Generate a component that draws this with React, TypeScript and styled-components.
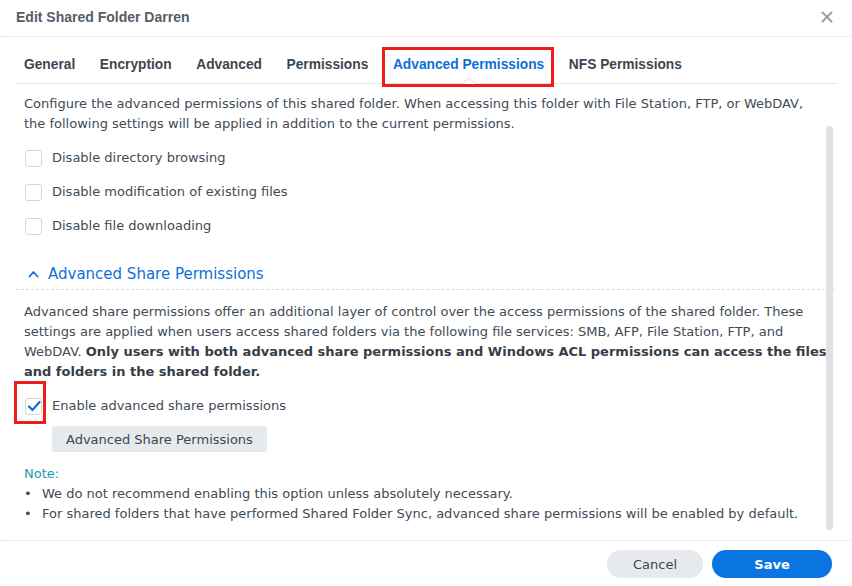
import React from "react";
import styled, { createGlobalStyle } from "styled-components";

const Global = createGlobalStyle`
  html, body { margin: 0; padding: 0; background: #fff; }
  body { font-family: "DejaVu Sans", Verdana, sans-serif; color: #414b55; }
  * { box-sizing: border-box; }
`;

const Dialog = styled.div`
  width: 852px;
  height: 586px;
  display: flex;
  flex-direction: column;
  background: #fff;
  overflow: hidden;
`;

const Header = styled.div`
  height: 37px;
  flex: none;
  display: flex;
  align-items: center;
  justify-content: space-between;
  padding: 0 16px 3px 16px;
  border-bottom: 1px dotted #d6d9dc;
`;

const Title = styled.div`
  font-family: "Liberation Sans", Arial, sans-serif;
  font-weight: 700;
  font-size: 14px;
  color: #555d66;
`;

const Close = styled.button`
  border: 0;
  background: none;
  padding: 0;
  width: 14px;
  height: 14px;
  display: flex;
  align-items: center;
  justify-content: center;
  margin-right: 2px;
`;

const TabBar = styled.div`
  flex: none;
  display: flex;
  gap: 24.6px;
  margin: 0 15px 0 16px;
  padding-left: 8px;
  border-bottom: 1px solid #e3e6e9;
`;

const Tab = styled.div<{ $active?: boolean }>`
  position: relative;
  font-family: "Liberation Sans", Arial, sans-serif;
  font-weight: 700;
  font-size: 13.75px;
  line-height: 16px;
  padding: 20px 0 10px;
  color: ${(p) => (p.$active ? "#0d6fd9" : "#3d4650")};
`;

const Caret = styled.span`
  position: absolute;
  left: 50%;
  bottom: -1px;
  width: 10px;
  height: 10px;
  margin-left: -5px;
  transform: translateY(5px) rotate(45deg);
  background: #fff;
  border-left: 1px solid #e3e6e9;
  border-top: 1px solid #e3e6e9;
`;

const RedBox = styled.span<{ $l: number; $t: number; $r: number; $b: number }>`
  position: absolute;
  left: ${(p) => p.$l}px;
  top: ${(p) => p.$t}px;
  right: ${(p) => p.$r}px;
  bottom: ${(p) => p.$b}px;
  border: 3px solid #f11b1b;
  pointer-events: none;
`;

const BodyWrap = styled.div`
  position: relative;
  flex: 1;
  min-height: 0;
`;

const Content = styled.div`
  padding: 10px 20px 0 24px;
  font-size: 13px;
  line-height: 20px;
  color: #414b55;
`;

const Thumb = styled.div`
  position: absolute;
  top: 42px;
  right: 19px;
  width: 7px;
  height: 404px;
  border-radius: 4px;
  background: #dfe1e3;
`;

const Para = styled.p<{ $inset?: number }>`
  margin: 0;
  padding-right: ${(p) => p.$inset ?? 0}px;
`;

const Strong = styled.b`
  font-weight: 700;
  color: #353e48;
`;

const CheckList = styled.div`
  margin-top: 7px;
  display: flex;
  flex-direction: column;
`;

const CheckRow = styled.label<{ $h?: number }>`
  display: flex;
  align-items: center;
  gap: 10px;
  height: ${(p) => p.$h ?? 34}px;
  padding-left: 1px;
`;

const Box = styled.span`
  position: relative;
  width: 17px;
  height: 17px;
  flex: none;
  border: 1px solid #d3d7dc;
  border-radius: 3px;
  background: #fff;
  display: flex;
  align-items: center;
  justify-content: center;
`;

const SectionHead = styled.div`
  margin: 20px -3px 0 -8px;
  padding: 0 0 4px 12px;
  display: flex;
  align-items: center;
  gap: 9px;
  height: 27px;
  border-bottom: 1px dashed #d9dcdf;
  font-size: 15px;
  color: #0d70d9;
`;

const Section = styled.div`
  padding-top: 12px;
`;

const EnableRow = styled(CheckRow)`
  margin-top: 12px;
`;

const GreyButton = styled.button`
  margin: 8px 0 0 28px;
  height: 26px;
  padding: 0 14px;
  border: 0;
  border-radius: 3px;
  background: #e6eaed;
  font-family: "DejaVu Sans", Verdana, sans-serif;
  font-size: 13px;
  color: #3d4650;
`;

const Note = styled.div`
  margin-top: 12px;
  color: #1b9bb0;
`;

const Bullets = styled.ul`
  margin: 0;
  padding: 0;
  list-style: none;
`;

const Bullet = styled.li`
  display: flex;
  gap: 12px;
  &::before {
    content: "•";
    width: 6px;
  }
`;

const Footer = styled.div`
  flex: none;
  height: 46px;
  border-top: 1px dotted #d6d9dc;
  display: flex;
  justify-content: flex-end;
  align-items: flex-start;
  gap: 9px;
  padding: 9px 20px 0 0;
`;

const Pill = styled.button<{ $primary?: boolean }>`
  height: 28px;
  width: ${(p) => (p.$primary ? 120 : 96)}px;
  border: 0;
  border-radius: 14px;
  font-family: "DejaVu Sans", Verdana, sans-serif;
  font-size: 13px;
  font-weight: ${(p) => (p.$primary ? 700 : 400)};
  background: ${(p) => (p.$primary ? "#0a74e0" : "#e6eaee")};
  color: ${(p) => (p.$primary ? "#fff" : "#3d4650")};
`;

const Check = () => (
  <svg width="14" height="14" viewBox="0 0 14 14">
    <path d="M2 7.5 L5.5 11 L12.5 3" fill="none" stroke="#0d70d9" strokeWidth="2.2" strokeLinecap="round" strokeLinejoin="round" />
  </svg>
);

const tabs = ["General", "Encryption", "Advanced", "Permissions", "Advanced Permissions", "NFS Permissions"];

export default function App() {
  return (
    <>
      <Global />
      <Dialog>
        <Header>
          <Title>Edit Shared Folder Darren</Title>
          <Close aria-label="close">
            <svg width="12" height="12" viewBox="0 0 12 12">
              <path d="M1.5 1.5 L10.5 10.5 M10.5 1.5 L1.5 10.5" stroke="#9aa0a6" strokeWidth="2" strokeLinecap="round" />
            </svg>
          </Close>
        </Header>
        <TabBar>
          {tabs.map((t) => (
            <Tab key={t} $active={t === "Advanced Permissions"}>
              {t}
              {t === "Advanced Permissions" && (
                <>
                  <Caret />
                  <RedBox $l={-11} $t={10} $r={-10} $b={-4} />
                </>
              )}
            </Tab>
          ))}
        </TabBar>
        <BodyWrap>
          <Content>
            <Para $inset={24}>
              Configure the advanced permissions of this shared folder. When accessing this folder with File Station, FTP, or WebDAV,
              the following settings will be applied in addition to the current permissions.
            </Para>
            <CheckList>
              <CheckRow><Box />Disable directory browsing</CheckRow>
              <CheckRow><Box />Disable modification of existing files</CheckRow>
              <CheckRow><Box />Disable file downloading</CheckRow>
            </CheckList>
            <SectionHead>
              <svg width="11" height="8" viewBox="0 0 11 8">
                <path d="M1.5 6.5 L5.5 2 L9.5 6.5" fill="none" stroke="#0d70d9" strokeWidth="1.8" strokeLinecap="round" strokeLinejoin="round" />
              </svg>
              Advanced Share Permissions
            </SectionHead>
            <Section>
              <Para>
                Advanced share permissions offer an additional layer of control over the access permissions of the shared folder. These
                settings are applied when users access shared folders via the following file services: SMB, AFP, File Station, FTP, and
                WebDAV. <Strong>Only users with both advanced share permissions and Windows ACL permissions can access the files and folders in the shared folder.</Strong>
              </Para>
              <EnableRow $h={24}>
                <Box>
                  <Check />
                  <RedBox $l={-12} $t={-18} $r={-5} $b={-10} />
                </Box>
                Enable advanced share permissions
              </EnableRow>
              <GreyButton>Advanced Share Permissions</GreyButton>
              <Note>Note:</Note>
              <Bullets>
                <Bullet>We do not recommend enabling this option unless absolutely necessary.</Bullet>
                <Bullet>For shared folders that have performed Shared Folder Sync, advanced share permissions will be enabled by default.</Bullet>
              </Bullets>
            </Section>
          </Content>
          <Thumb />
        </BodyWrap>
        <Footer>
          <Pill>Cancel</Pill>
          <Pill $primary>Save</Pill>
        </Footer>
      </Dialog>
    </>
  );
}
